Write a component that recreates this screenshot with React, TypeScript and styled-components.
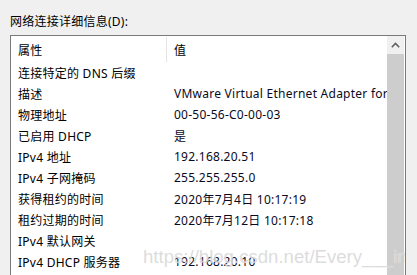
import React from "react";
import styled, { createGlobalStyle } from "styled-components";

const GlobalStyle = createGlobalStyle`
  html, body {
    margin: 0;
    padding: 0;
    background: #f0f0f0;
    overflow: hidden;
  }
  body {
    font-family: "Noto Sans", "Noto Sans CJK SC", sans-serif;
    font-size: 12px;
    letter-spacing: 0.25px;
    color: #000;
  }
`;

type Row = { name: string; value: string };

const ROWS: Row[] = [
  { name: "连接特定的 DNS 后缀", value: "" },
  { name: "描述", value: "VMware Virtual Ethernet Adapter for VMnet8" },
  { name: "物理地址", value: "00-50-56-C0-00-03" },
  { name: "已启用 DHCP", value: "是" },
  { name: "IPv4 地址", value: "192.168.20.51" },
  { name: "IPv4 子网掩码", value: "255.255.255.0" },
  { name: "获得租约的时间", value: "2020年7月4日 10:17:19" },
  { name: "租约过期的时间", value: "2020年7月12日 10:17:18" },
  { name: "IPv4 默认网关", value: "" },
  { name: "IPv4 DHCP 服务器", value: "192.168.20.10" },
  { name: "IPv4 DNS 服务器", value: "192.168.20.2" },
];

const App: React.FC = () => {
  return (
    <>
      <GlobalStyle />
      <Page>
        <Caption>网络连接详细信息(D):</Caption>
        <ListBox>
          <Table>
            <HeaderRow>
              <HeaderCell $divider>属性</HeaderCell>
              <HeaderCell>值</HeaderCell>
            </HeaderRow>
            {ROWS.map((row, i) => (
              <DataRow key={i}>
                <NameCell>{row.name}</NameCell>
                <ValueCell>{row.value}</ValueCell>
              </DataRow>
            ))}
          </Table>
          <ScrollBar>
            <ArrowButton>
              <svg width="9" height="6" viewBox="0 0 9 6">
                <path
                  d="M0.8 5.2 L4.5 1.5 L8.2 5.2"
                  fill="none"
                  stroke="#606060"
                  strokeWidth="1.6"
                />
              </svg>
            </ArrowButton>
            <Thumb />
          </ScrollBar>
          <Watermark>https://blog.csdn.net/Every___ingday</Watermark>
        </ListBox>
      </Page>
    </>
  );
};

const Page = styled.main`
  display: flex;
  flex-direction: column;
  padding: 15px 0 0 10px;
  width: 396px;
`;

const Caption = styled.div`
  height: 20px;
  line-height: 14px;
  white-space: nowrap;
`;

const ListBox = styled.div`
  position: relative;
  display: flex;
  height: 260px;
  border: 1px solid #7a7a7a;
  background: #fff;
  overflow: hidden;
  padding-right: 1px;
`;

const Table = styled.div`
  display: flex;
  flex-direction: column;
  width: 376px;
  overflow: hidden;
`;

const HeaderRow = styled.div`
  display: grid;
  grid-template-columns: 156px 1fr;
  height: 25px;
  padding-top: 1px;
`;

const HeaderCell = styled.div<{ $divider?: boolean }>`
  display: flex;
  align-items: center;
  padding-left: 7px;
  border-right: ${(p) => (p.$divider ? "1px solid #e5e5e5" : "none")};
  white-space: nowrap;
`;

const DataRow = styled.div`
  display: grid;
  grid-template-columns: 156px 1fr;
  height: 21px;
  align-items: center;
  white-space: nowrap;
`;

const NameCell = styled.div`
  padding-left: 7px;
  overflow: hidden;
`;

const ValueCell = styled.div`
  padding-left: 7px;
  overflow: hidden;
  color: #0a0a1e;
`;

const ScrollBar = styled.div`
  display: flex;
  flex-direction: column;
  width: 17px;
  background: #f0f0f0;
`;

const ArrowButton = styled.div`
  display: flex;
  align-items: center;
  justify-content: center;
  height: 18px;
`;

const Thumb = styled.div`
  flex: 1;
  background: #cdcdcd;
`;

const Watermark = styled.div`
  position: absolute;
  left: 132px;
  top: 210px;
  font-family: "Liberation Sans", Arial, sans-serif;
  font-size: 18.6px;
  letter-spacing: 0;
  color: rgba(205, 205, 205, 0.7);
  text-shadow: 0 0 1px rgba(255, 255, 255, 0.8);
  white-space: nowrap;
  pointer-events: none;
`;

export default App;
